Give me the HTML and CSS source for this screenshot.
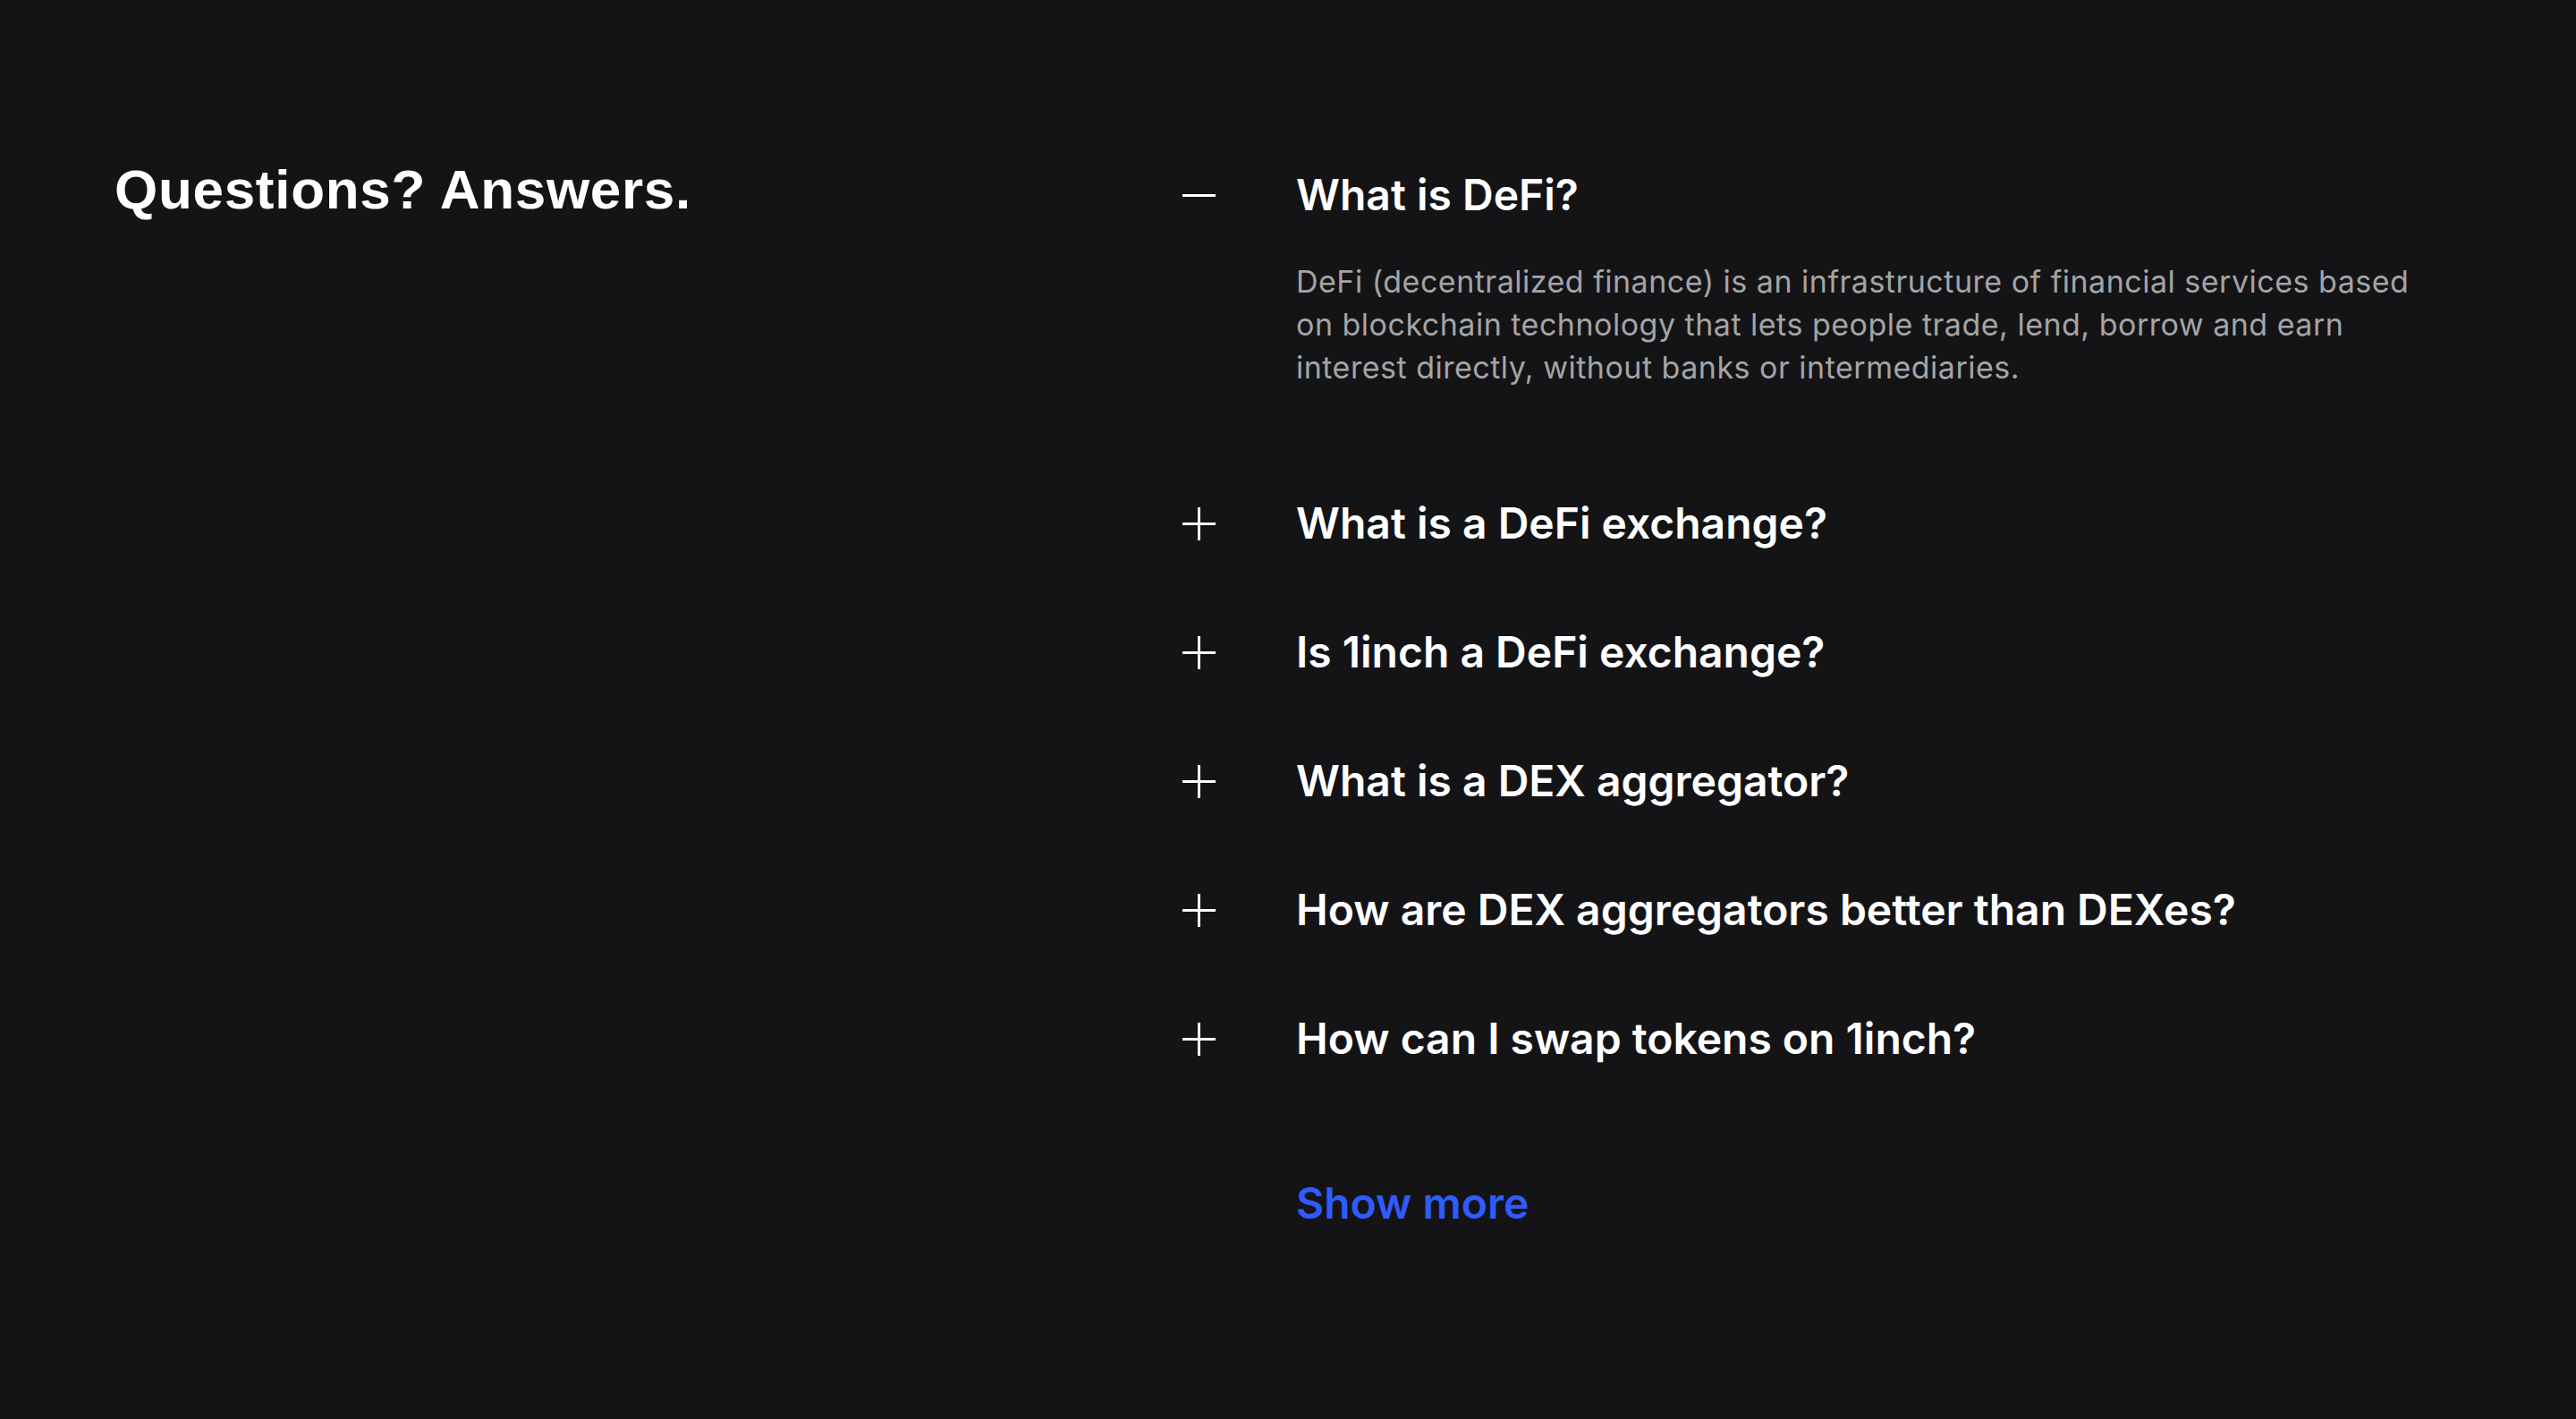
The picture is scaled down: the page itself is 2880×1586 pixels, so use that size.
FILE: index.html
```html
<!DOCTYPE html>
<html lang="en">
<head>
    <meta charset="UTF-8">
    <meta name="viewport" content="width=device-width, initial-scale=1.0">
    <title>FAQ</title>
    <link rel="stylesheet" href="styles.css">
</head>
<body>
    <section class="faq">
        <h2 class="faq-title">Questions? Answers.</h2>

        <div class="faq-list">
            <div class="faq-item open">
                <button class="faq-question">
                    <span class="faq-icon"></span>
                    <span class="faq-text">What is DeFi?</span>
                </button>
                <p class="faq-answer">DeFi (decentralized finance) is an infrastructure of financial services based on blockchain technology that lets people trade, lend, borrow and earn interest directly, without banks or intermediaries.</p>
            </div>
            <div class="faq-item">
                <button class="faq-question">
                    <span class="faq-icon"></span>
                    <span class="faq-text">What is a DeFi exchange?</span>
                </button>
            </div>
            <div class="faq-item">
                <button class="faq-question">
                    <span class="faq-icon"></span>
                    <span class="faq-text">Is 1inch a DeFi exchange?</span>
                </button>
            </div>
            <div class="faq-item">
                <button class="faq-question">
                    <span class="faq-icon"></span>
                    <span class="faq-text">What is a DEX aggregator?</span>
                </button>
            </div>
            <div class="faq-item">
                <button class="faq-question">
                    <span class="faq-icon"></span>
                    <span class="faq-text">How are DEX aggregators better than DEXes?</span>
                </button>
            </div>
            <div class="faq-item">
                <button class="faq-question">
                    <span class="faq-icon"></span>
                    <span class="faq-text">How can I swap tokens on 1inch?</span>
                </button>
            </div>

            <a class="show-more" href="#">Show more</a>
        </div>
    </section>

    <script>
        document.querySelectorAll(".faq-question").forEach(function (btn) {
            btn.addEventListener("click", function () {
                btn.parentElement.classList.toggle("open");
            });
        });
    </script>
</body>
</html>
```

FILE: styles.css
```css
body {
    margin: 0;
    background-color: #141416;
    color: #ffffff;
    font-family: Inter, "Noto Sans", sans-serif;
    min-height: 100vh;
}

.faq {
    display: flex;
    padding: 180px 128px 120px;
}

.faq-title {
    width: 1194px;
    flex-shrink: 0;
    margin: -5px 0 0;
    font-family: "Liberation Sans", Arial, sans-serif;
    font-size: 62px;
    font-weight: 700;
    line-height: 1.2;
    letter-spacing: 0.7px;
}

.faq-list {
    flex: 1;
    display: flex;
    flex-direction: column;
    gap: 88px;
    padding-top: 10px;
}

.faq-question {
    display: flex;
    align-items: center;
    background: none;
    border: none;
    padding: 0;
    color: inherit;
    font: inherit;
    cursor: pointer;
    text-align: left;
}

.faq-text {
    font-size: 48px;
    font-weight: 600;
    line-height: 56px;
}

/* plus / minus drawn with two bars */
.faq-icon {
    position: relative;
    width: 37px;
    height: 37px;
    margin-right: 90px;
    flex-shrink: 0;
}

.faq-icon::before,
.faq-icon::after {
    content: "";
    position: absolute;
    background: #ffffff;
}

.faq-icon::before {
    left: 0;
    right: 0;
    top: 17px;
    height: 3px;
}

.faq-icon::after {
    top: 0;
    bottom: 0;
    left: 17px;
    width: 3px;
}

.faq-item.open .faq-icon::after {
    display: none;
}

.faq-answer {
    display: none;
    max-width: 1262px;
    margin: 45px 0 34px 127px;
    color: #a4a4a7;
    font-size: 34px;
    line-height: 48px;
    letter-spacing: 0.5px;
}

.faq-item.open .faq-answer {
    display: block;
}

.show-more {
    align-self: flex-start;
    margin: 40px 0 0 127px;
    color: #2f5bff;
    font-size: 48px;
    font-weight: 600;
    line-height: 56px;
    text-decoration: none;
}
```
